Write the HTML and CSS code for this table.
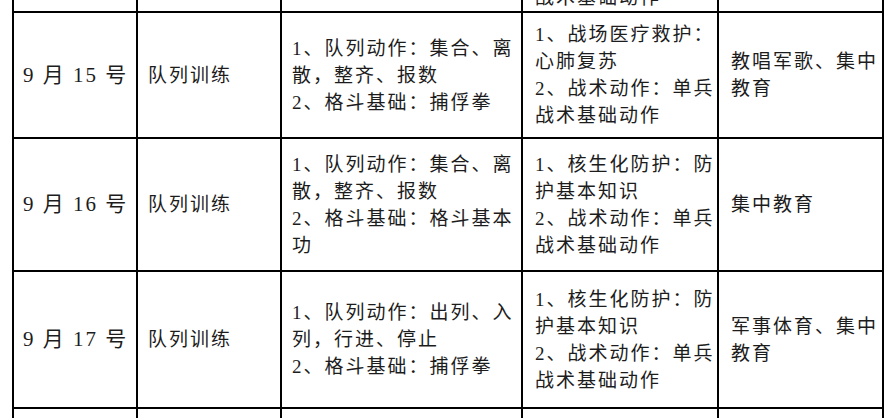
FILE: index.html
```html
<!DOCTYPE html>
<html lang="zh-CN">
<head>
<meta charset="utf-8">
<title>训练安排</title>
<link rel="stylesheet" href="styles.css">
</head>
<body>
<div class="sheet">
  <table class="plan">
    <colgroup>
      <col class="c-date"><col class="c-am"><col class="c-drill"><col class="c-tac"><col class="c-eve">
    </colgroup>
    <tr class="row-cut-top">
      <td></td><td></td><td></td>
      <td class="tac bottom">战术基础动作</td>
      <td></td>
    </tr>
    <tr class="row-a">
      <td class="date">9 月 15 号</td>
      <td>队列训练</td>
      <td>1、队列动作：集合、离<br>散，整齐、报数<br>2、格斗基础：捕俘拳</td>
      <td class="tac">1、战场医疗救护：<br>心肺复苏<br>2、战术动作：单兵<br>战术基础动作</td>
      <td class="eve">教唱军歌、集中<br>教育</td>
    </tr>
    <tr class="row-b">
      <td class="date">9 月 16 号</td>
      <td>队列训练</td>
      <td>1、队列动作：集合、离<br>散，整齐、报数<br>2、格斗基础：格斗基本<br>功</td>
      <td class="tac">1、核生化防护：防<br>护基本知识<br>2、战术动作：单兵<br>战术基础动作</td>
      <td class="eve">集中教育</td>
    </tr>
    <tr class="row-c">
      <td class="date">9 月 17 号</td>
      <td>队列训练</td>
      <td>1、队列动作：出列、入<br>列，行进、停止<br>2、格斗基础：捕俘拳</td>
      <td class="tac">1、核生化防护：防<br>护基本知识<br>2、战术动作：单兵<br>战术基础动作</td>
      <td class="eve">军事体育、集中<br>教育</td>
    </tr>
    <tr class="row-cut-bottom">
      <td></td><td></td><td></td><td></td><td></td>
    </tr>
  </table>
</div>
</body>
</html>
```

FILE: styles.css
```css
html, body {
  margin: 0;
  padding: 0;
  background: #ffffff;
}

.sheet {
  width: 895px;
  height: 418px;
  overflow: hidden;
}

.plan {
  border-collapse: collapse;
  table-layout: fixed;
  width: 872px;
  margin: -30px 0 0 12px;
  font-family: "Liberation Serif", "Noto Sans CJK SC", serif;
  font-size: 19px;
  line-height: 27px;
  letter-spacing: 2px;
  color: #1c1c1c;
}

.c-date { width: 124px; }
.c-am { width: 144px; }
.c-drill { width: 241px; }
.c-tac { width: 196px; }
.c-eve { width: 165px; }

.plan td {
  border: 2px solid #000;
  padding: 0 6px 0 10px;
  vertical-align: middle;
  white-space: nowrap;
}

.plan td.date {
  padding-left: 9px;
  font-size: 21px;
  letter-spacing: 2px;
}

.plan td.tac,
.plan td.eve {
  padding-left: 12px;
}

.plan td.bottom {
  vertical-align: bottom;
}

.row-cut-top { height: 41px; }
.row-a { height: 126px; }
.row-b { height: 133px; }
.row-c { height: 137px; }
.row-cut-bottom { height: 30px; }
```
